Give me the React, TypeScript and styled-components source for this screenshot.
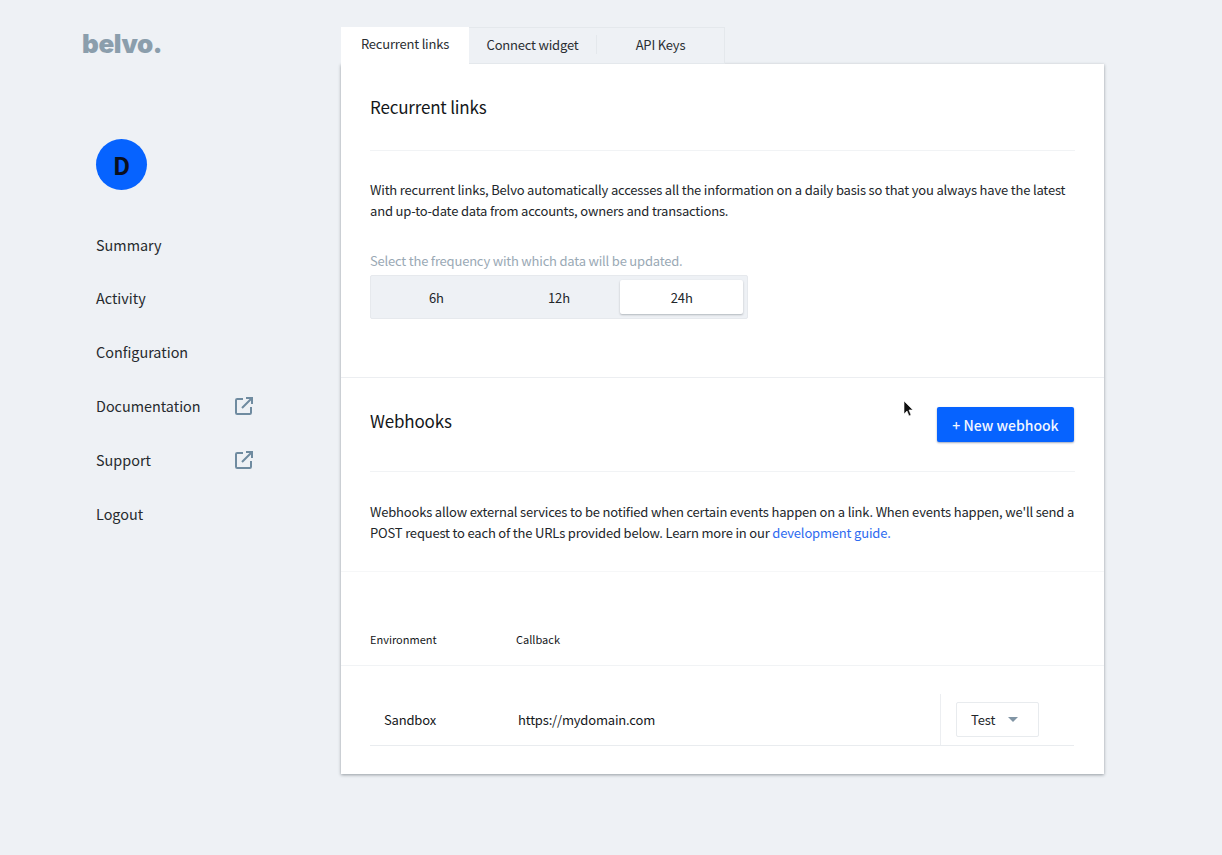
import React from "react";
import styled, { createGlobalStyle } from "styled-components";

const Global = createGlobalStyle`
  html, body { margin: 0; padding: 0; background: #eef1f5; }
  body { font-family: "Noto Sans CJK JP", "Noto Sans", sans-serif; color: #14171a; -webkit-font-smoothing: antialiased; }
  * { box-sizing: border-box; }
`;

const Page = styled.div`
  width: 1222px;
  height: 855px;
  display: flex;
  overflow: hidden;
  position: relative;
`;

const Sidebar = styled.aside`
  width: 341px;
  flex: none;
  padding: 27px 0 0 82px;
`;

const Logo = styled.div`
  font-family: "Inter", sans-serif;
  font-weight: 900;
  font-size: 26px;
  line-height: 34px;
  letter-spacing: -0.4px;
  color: #8b9eac;
  height: 34px;
`;

const Avatar = styled.div`
  width: 51px;
  height: 51px;
  margin: 78px 0 0 14px;
  border-radius: 50%;
  background: #0663ff;
  color: #0a0f1e;
  font-size: 24px;
  font-weight: 700;
  display: flex;
  align-items: center;
  justify-content: center;
`;

const Menu = styled.nav`
  margin: 42px 0 0 14px;
  display: flex;
  flex-direction: column;
  gap: 29.9px;
`;

const MenuItem = styled.div`
  width: 157px;
  height: 24px;
  display: flex;
  align-items: center;
  justify-content: space-between;
  font-size: 14.4px;
  color: #262a2e;
`;

const Main = styled.main`
  width: 763px;
  padding-top: 27px;
`;

const Tabs = styled.div`
  display: flex;
  height: 37px;
`;

const ActiveTab = styled.div`
  width: 128px;
  background: #fff;
  display: flex;
  align-items: center;
  justify-content: center;
  font-size: 13px;
  letter-spacing: -0.2px;
  padding-bottom: 4px;
  color: #2a2e32;
`;

const TabGroup = styled.div`
  width: 256px;
  display: flex;
  align-items: center;
  padding-bottom: 2px;
  border: 1px solid #e4e8ec;
  border-left: none;
  background: #eef1f5;
`;

const Tab = styled.div<{ $divided?: boolean }>`
  flex: 1;
  height: 19px;
  display: flex;
  align-items: center;
  justify-content: center;
  font-size: 13px;
  letter-spacing: -0.2px;
  color: #2a2e32;
  border-left: ${(p) => (p.$divided ? "1px solid #e4e8ec" : "none")};
`;

const Card = styled.div`
  background: #fff;
  height: 710px;
  box-shadow: 0 1px 3px rgba(40, 50, 60, 0.45);
`;

const Section = styled.section<{ $height: number; $line: string }>`
  height: ${(p) => p.$height}px;
  padding: 0 29px;
  border-bottom: 1px solid ${(p) => p.$line};
`;

const SectionHead = styled.div<{ $height: number; $lift: number }>`
  height: ${(p) => p.$height}px;
  padding-bottom: ${(p) => p.$lift}px;
  display: flex;
  align-items: center;
  justify-content: space-between;
  border-bottom: 1px solid #f1f3f5;
`;

const Title = styled.h2`
  margin: 0;
  font-size: 17px;
  font-weight: 400;
  letter-spacing: -0.18px;
  color: #14171a;
`;

const Paragraph = styled.p<{ $top: number }>`
  margin: ${(p) => p.$top}px 0 0;
  font-size: 13px;
  line-height: 21px;
  letter-spacing: -0.18px;
  color: #22262a;
  white-space: nowrap;
`;

const Link = styled.a`
  color: #2e6bf0;
`;

const FieldLabel = styled.div`
  margin-top: 29px;
  font-size: 13px;
  line-height: 21px;
  letter-spacing: -0.2px;
  color: #9aa9b5;
`;

const Segments = styled.div`
  margin-top: 4px;
  width: 378px;
  height: 44px;
  padding: 4px 4px;
  display: flex;
  background: #eef1f5;
  border: 1px solid #e6e9ed;
  border-radius: 2px;
`;

const Segment = styled.div<{ $active?: boolean }>`
  flex: 1;
  display: flex;
  align-items: center;
  justify-content: center;
  font-size: 13px;
  letter-spacing: -0.1px;
  border-radius: 2px;
  color: #22262a;
  background: ${(p) => (p.$active ? "#fff" : "transparent")};
  box-shadow: ${(p) => (p.$active ? "0 1px 2px rgba(40,50,60,0.3)" : "none")};
`;

const PrimaryButton = styled.button`
  width: 137px;
  height: 35px;
  margin: 8px 1px 0 0;
  border: none;
  border-radius: 2px;
  background: #0663ff;
  color: #f2f6ff;
  font: 500 14px "Noto Sans CJK JP", sans-serif;
  box-shadow: 0 1px 2px rgba(20, 40, 90, 0.4);
  padding: 0;
`;

const TableHead = styled.div`
  height: 94px;
  padding: 0 29px 16px;
  display: flex;
  align-items: flex-end;
  border-bottom: 1px solid #f1f3f5;
`;

const HeadCell = styled.div<{ $width?: number }>`
  width: ${(p) => (p.$width ? `${p.$width}px` : "auto")};
  font-size: 11px;
  font-weight: 400;
  line-height: 20px;
`;

const Row = styled.div`
  margin: 28px 30px 0 29px;
  height: 52px;
  display: flex;
  align-items: stretch;
  border-bottom: 1px solid #e9ecef;
`;

const EnvCell = styled.div`
  width: 148px;
  padding: 16px 0 0 14px;
  font-size: 13px;
  letter-spacing: -0.18px;
  line-height: 20px;
`;

const UrlCell = styled.div`
  flex: 1;
  padding-top: 16px;
  font-size: 13px;
  letter-spacing: -0.18px;
  line-height: 20px;
`;

const ActionCell = styled.div`
  width: 134px;
  padding: 8px 0 0 15px;
  border-left: 1px solid #eceef1;
`;

const Dropdown = styled.div`
  width: 83px;
  height: 35px;
  display: flex;
  align-items: center;
  gap: 13px;
  padding-left: 14px;
  border: 1px solid #e8ebee;
  border-radius: 2px;
  font-size: 13px;
  letter-spacing: -0.1px;
  color: #22262a;
`;

const Caret = styled.span`
  width: 0;
  height: 0;
  border-left: 5px solid transparent;
  border-right: 5px solid transparent;
  border-top: 5px solid #8195a5;
`;

const Cursor = styled.svg`
  position: absolute;
  left: 903px;
  top: 400px;
`;

const ExternalIcon = () => (
  <svg width="18" height="18" viewBox="0 0 18 18" fill="none" stroke="#6f8ba0" strokeWidth="2">
    <path d="M8 2H2.2A1.2 1.2 0 0 0 1 3.2v12.6A1.2 1.2 0 0 0 2.2 17h12.6a1.2 1.2 0 0 0 1.2-1.2V10" />
    <path d="M11 1h6v6M17 1 7 11" />
  </svg>
);

const navItems = ["Summary", "Activity", "Configuration", "Documentation", "Support", "Logout"];

export default function App() {
  return (
    <Page>
      <Global />
      <Sidebar>
        <Logo>belvo.</Logo>
        <Avatar>D</Avatar>
        <Menu>
          {navItems.map((item) => (
            <MenuItem key={item}>
              {item}
              {(item === "Documentation" || item === "Support") && <ExternalIcon />}
            </MenuItem>
          ))}
        </Menu>
      </Sidebar>
      <Main>
        <Tabs>
          <ActiveTab>Recurrent links</ActiveTab>
          <TabGroup>
            <Tab>Connect widget</Tab>
            <Tab $divided>API Keys</Tab>
          </TabGroup>
        </Tabs>
        <Card>
          <Section $height={314} $line="#eceef1">
            <SectionHead $height={87} $lift={2}>
              <Title>Recurrent links</Title>
            </SectionHead>
            <Paragraph $top={28}>
              With recurrent links, Belvo automatically accesses all the information on a daily basis so that you always have the latest
              <br />
              and up-to-date data from accounts, owners and transactions.
            </Paragraph>
            <FieldLabel>Select the frequency with which data will be updated.</FieldLabel>
            <Segments>
              <Segment>6h</Segment>
              <Segment>12h</Segment>
              <Segment $active>24h</Segment>
            </Segments>
          </Section>
          <Section $height={194} $line="#f6f7f8">
            <SectionHead $height={94} $lift={8}>
              <Title>Webhooks</Title>
              <PrimaryButton>+ New webhook</PrimaryButton>
            </SectionHead>
            <Paragraph $top={29}>
              Webhooks allow external services to be notified when certain events happen on a link. When events happen, we'll send a
              <br />
              POST request to each of the URLs provided below. Learn more in our <Link>development guide.</Link>
            </Paragraph>
          </Section>
          <TableHead>
            <HeadCell $width={146}>Environment</HeadCell>
            <HeadCell>Callback</HeadCell>
          </TableHead>
          <Row>
            <EnvCell>Sandbox</EnvCell>
            <UrlCell>https://mydomain.com</UrlCell>
            <ActionCell>
              <Dropdown>
                Test
                <Caret />
              </Dropdown>
            </ActionCell>
          </Row>
        </Card>
      </Main>
      <Cursor width="12" height="18" viewBox="0 0 12 18">
        <path d="M1 1v13l3-3 2 5 2-1-2-5h4z" fill="#111" stroke="#fff" strokeWidth="0.6" />
      </Cursor>
    </Page>
  );
}
